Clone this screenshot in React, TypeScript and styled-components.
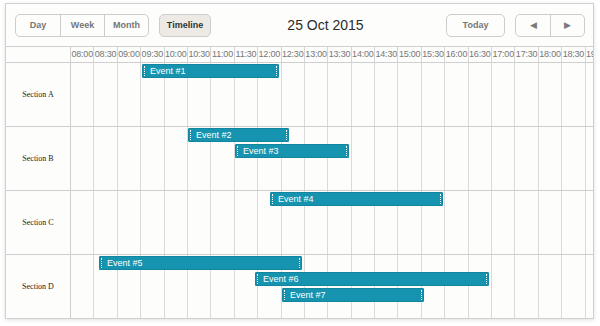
import styled, { createGlobalStyle } from 'styled-components';

type SchedEvent = {
    id: number;
    text: string;
    left: number;
    width: number;
    level: number;
};

type Section = {
    name: string;
    events: SchedEvent[];
};

const COL_WIDTH = 23.4;
const EVENT_HEIGHT = 14;
const EVENT_STEP = 16;

const GlobalStyle = createGlobalStyle`
    html, body {
        margin: 0;
        padding: 0;
        background: #ffffff;
    }

    body {
        font-family: "Liberation Sans", Arial, sans-serif;
    }
`;

const times = [
    '08:00', '08:30', '09:00', '09:30', '10:00', '10:30', '11:00', '11:30',
    '12:00', '12:30', '13:00', '13:30', '14:00', '14:30', '15:00', '15:30',
    '16:00', '16:30', '17:00', '17:30', '18:00', '18:30', '19:00',
];

const sections: Section[] = [
    {
        name: 'Section A',
        events: [{ id: 1, text: 'Event #1', left: 71, width: 137, level: 0 }],
    },
    {
        name: 'Section B',
        events: [
            { id: 2, text: 'Event #2', left: 117, width: 101, level: 0 },
            { id: 3, text: 'Event #3', left: 164, width: 114, level: 1 },
        ],
    },
    {
        name: 'Section C',
        events: [{ id: 4, text: 'Event #4', left: 199, width: 173, level: 0 }],
    },
    {
        name: 'Section D',
        events: [
            { id: 5, text: 'Event #5', left: 28, width: 203, level: 0 },
            { id: 6, text: 'Event #6', left: 184, width: 234, level: 1 },
            { id: 7, text: 'Event #7', left: 211, width: 142, level: 2 },
        ],
    },
];

const App = () => {
    return (
        <>
        <GlobalStyle />
        <Page>
            <Scheduler>
                <Toolbar>
                    <ButtonGroup>
                        <GroupButton>Day</GroupButton>
                        <GroupButton>Week</GroupButton>
                        <GroupButton>Month</GroupButton>
                    </ButtonGroup>

                    <TabButton active>Timeline</TabButton>

                    <DateTitle>25 Oct 2015</DateTitle>

                    <TabButton width={59}>Today</TabButton>

                    <ButtonGroup>
                        <ArrowButton>&#9664;</ArrowButton>
                        <ArrowButton>&#9654;</ArrowButton>
                    </ButtonGroup>
                </Toolbar>

                <ScaleRow>
                    <SectionHeader />
                    <Scale>
                        { times.map(t => <ScaleCell key={t}>{t}</ScaleCell>) }
                    </Scale>
                </ScaleRow>

                { sections.map(section => (
                    <DataRow key={section.name}>
                        <SectionLabel>{section.name}</SectionLabel>
                        <Lane>
                            { times.map(t => <LaneCell key={t} />) }
                            { section.events.map(ev => (
                                <EventBar
                                    key={ev.id}
                                    style={{
                                        left: ev.left,
                                        width: ev.width,
                                        top: 1 + ev.level * EVENT_STEP,
                                    }}
                                >
                                    {ev.text}
                                </EventBar>
                            )) }
                        </Lane>
                    </DataRow>
                )) }
            </Scheduler>
        </Page>
        </>
    );
};

const Page = styled.div`
    padding: 3px 6px 8px 5px;
`;

const Scheduler = styled.div`
    width: 589px;
    height: 316px;
    box-sizing: border-box;
    border: 1px solid #cfcfcf;
    background: #fdfdfc;
    box-shadow: 0 1px 4px rgba(0, 0, 0, 0.12);
    display: flex;
    flex-direction: column;
    overflow: hidden;
`;

const Toolbar = styled.div`
    height: 43px;
    flex-shrink: 0;
    display: flex;
    align-items: center;
    padding: 0 8px 0 9px;
    box-sizing: border-box;
    border-bottom: 1px solid #cfcfcf;
    gap: 10px;
`;

const ButtonGroup = styled.div`
    display: flex;
    height: 23px;
    box-sizing: border-box;
    border: 1px solid #cdcdcd;
    border-radius: 5px;
    overflow: hidden;
    background: #fdfdfc;
`;

const GroupButton = styled.div`
    width: 44px;
    box-sizing: border-box;
    display: flex;
    align-items: center;
    justify-content: center;
    font-size: 9px;
    font-weight: bold;
    color: #767676;

    & + & {
        border-left: 1px solid #cdcdcd;
    }
`;

const ArrowButton = styled(GroupButton)`
    width: 34px;
    font-size: 9px;
    font-weight: normal;
    color: #7a7a7a;
`;

const TabButton = styled.div<{ active?: boolean; width?: number }>`
    width: ${ props => props.width ?? 52 }px;
    height: 23px;
    box-sizing: border-box;
    border: 1px solid #cdcdcd;
    border-radius: 5px;
    display: flex;
    align-items: center;
    justify-content: center;
    font-size: 9px;
    font-weight: bold;
    color: ${ props => props.active ? '#333333' : '#767676' };
    background: ${ props => props.active ? '#edeae5' : '#fdfdfc' };
`;

const DateTitle = styled.div`
    flex: 1;
    text-align: center;
    font-size: 14px;
    color: #2b2b2b;
    padding-right: 6px;
`;

const ScaleRow = styled.div`
    display: flex;
    height: 15px;
    flex-shrink: 0;
    border-bottom: 1px solid #cfcfcf;
`;

const SectionHeader = styled.div`
    width: 64px;
    flex-shrink: 0;
    border-right: 1px solid #cfcfcf;
`;

const Scale = styled.div`
    display: flex;
    flex: 1;
    overflow: hidden;
`;

const ScaleCell = styled.div`
    width: ${ COL_WIDTH }px;
    flex-shrink: 0;
    box-sizing: border-box;
    border-right: 1px solid #d6d6d6;
    font-size: 9px;
    line-height: 15px;
    color: #777777;
    text-align: center;
    white-space: nowrap;
    overflow: hidden;
    letter-spacing: -0.2px;
`;

const DataRow = styled.div`
    display: flex;
    height: 64px;
    flex-shrink: 0;
    box-sizing: border-box;
    border-bottom: 1px solid #cfcfcf;
`;

const SectionLabel = styled.div`
    width: 64px;
    flex-shrink: 0;
    border-right: 1px solid #cfcfcf;
    display: flex;
    align-items: center;
    justify-content: center;
    font-family: "Liberation Serif", "Times New Roman", serif;
    font-size: 8px;
    color: #222222;
`;

const Lane = styled.div`
    position: relative;
    display: flex;
    flex: 1;
    overflow: hidden;
`;

const LaneCell = styled.div`
    width: ${ COL_WIDTH }px;
    flex-shrink: 0;
    box-sizing: border-box;
    border-right: 1px solid #dadada;
`;

const EventBar = styled.div`
    position: absolute;
    height: ${ EVENT_HEIGHT }px;
    box-sizing: border-box;
    background: #1693ae;
    border: 1px solid #12869f;
    border-radius: 1px;
    color: #ffffff;
    font-size: 9px;
    line-height: 12px;
    padding-left: 7px;
    white-space: nowrap;
    overflow: hidden;

    &::before,
    &::after {
        content: '';
        position: absolute;
        top: 1px;
        bottom: 1px;
        border-left: 1px dotted #ffffff;
    }

    &::before {
        left: 1px;
    }

    &::after {
        right: 1px;
    }
`;

export default App;
